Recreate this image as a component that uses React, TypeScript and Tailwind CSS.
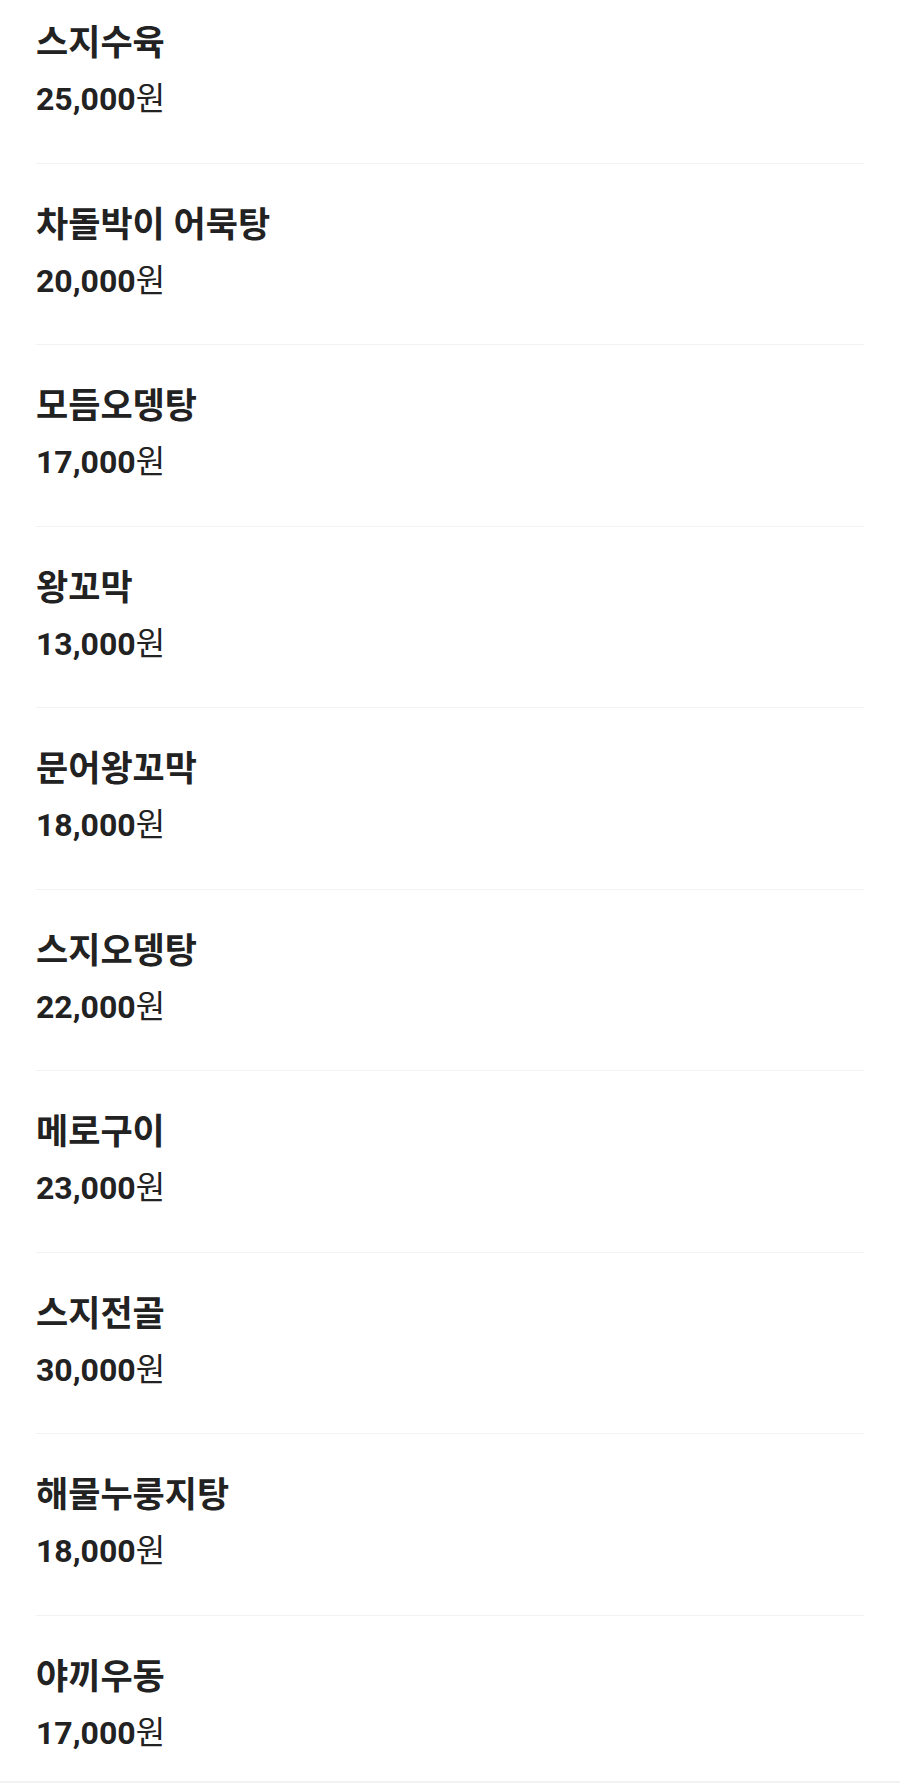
const menu = [
  { name: "스지수육", price: "25,000" },
  { name: "차돌박이 어묵탕", price: "20,000" },
  { name: "모듬오뎅탕", price: "17,000" },
  { name: "왕꼬막", price: "13,000" },
  { name: "문어왕꼬막", price: "18,000" },
  { name: "스지오뎅탕", price: "22,000" },
  { name: "메로구이", price: "23,000" },
  { name: "스지전골", price: "30,000" },
  { name: "해물누룽지탕", price: "18,000" },
  { name: "야끼우동", price: "17,000" },
];

export default function App() {
  return (
    <div className="min-h-[1783px] bg-[#f3f3f3] font-['Roboto','Noto_Sans_CJK_KR',sans-serif] text-[#222]">
      <ul className="bg-white px-[36px]">
        {menu.map((item) => (
          <li
            key={item.name}
            className="border-t border-[#f2f2f2] pt-[42px] pb-[43.5px] first:border-t-0 first:pt-[24px] last:pb-[28px]"
          >
            <p className="text-[35px] font-bold leading-[40px]">{item.name}</p>
            <p className="mt-[15px] text-[32px] font-bold leading-[40px]">
              {item.price}
              <span className="font-normal">원</span>
            </p>
          </li>
        ))}
      </ul>
    </div>
  );
}
